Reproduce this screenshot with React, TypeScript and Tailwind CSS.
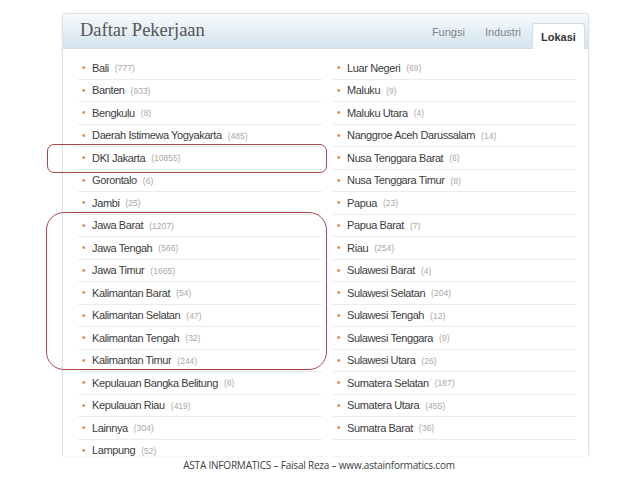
const LEFT = [
  ["Bali", "777"],
  ["Banten", "933"],
  ["Bengkulu", "8"],
  ["Daerah Istimewa Yogyakarta", "485"],
  ["DKI Jakarta", "10855"],
  ["Gorontalo", "6"],
  ["Jambi", "25"],
  ["Jawa Barat", "1207"],
  ["Jawa Tengah", "566"],
  ["Jawa Timur", "1665"],
  ["Kalimantan Barat", "54"],
  ["Kalimantan Selatan", "47"],
  ["Kalimantan Tengah", "32"],
  ["Kalimantan Timur", "244"],
  ["Kepulauan Bangka Belitung", "8"],
  ["Kepulauan Riau", "419"],
  ["Lainnya", "304"],
  ["Lampung", "52"],
];

const RIGHT = [
  ["Luar Negeri", "69"],
  ["Maluku", "9"],
  ["Maluku Utara", "4"],
  ["Nanggroe Aceh Darussalam", "14"],
  ["Nusa Tenggara Barat", "6"],
  ["Nusa Tenggara Timur", "8"],
  ["Papua", "23"],
  ["Papua Barat", "7"],
  ["Riau", "254"],
  ["Sulawesi Barat", "4"],
  ["Sulawesi Selatan", "204"],
  ["Sulawesi Tengah", "12"],
  ["Sulawesi Tenggara", "9"],
  ["Sulawesi Utara", "26"],
  ["Sumatera Selatan", "187"],
  ["Sumatera Utara", "455"],
  ["Sumatra Barat", "36"],
];

function Column({ items }: { items: string[][] }) {
  return (
    <ul>
      {items.map(([name, count]) => (
        <li
          key={name}
          className="h-[22.5px] flex items-center border-b border-[#e9ecee] pl-[4px] text-[11px] tracking-[-0.4px] text-[#3c3c3c]"
        >
          <span className="text-[#e08a50] mr-[7px] text-[10px]">•</span>
          <span>{name}</span>
          <span className="ml-[6px] text-[8.5px] tracking-normal text-[#a8a8a8] mt-[2px]">({count})</span>
        </li>
      ))}
    </ul>
  );
}

export default function App() {
  return (
    <div className="relative w-[638px] h-[479px] bg-white overflow-hidden font-['Liberation_Sans',Arial,sans-serif]">
      <div className="ml-[62px] pt-[13px]">
        <div className="w-[527px] h-[443px] border border-b-0 border-[#dde2e6] rounded-t-[4px] overflow-hidden shadow-[0_0_3px_rgba(0,0,0,0.08)]">
          {/* header */}
          <div className="h-[35px] flex items-end justify-between bg-gradient-to-b from-[#f8fafc] to-[#d4e3ee] border-b border-[#d2dde6]">
            <h1 className="self-center pl-[17px] font-['Liberation_Serif',Georgia,serif] text-[18.5px] text-[#555]">
              Daftar Pekerjaan
            </h1>
            <div className="flex items-end text-[11px] pr-[3px]">
              <span className="px-[10px] pb-[8px] text-[#7a8590]">Fungsi</span>
              <span className="px-[10px] pb-[8px] text-[#7a8590]">Industri</span>
              <span className="ml-[1px] w-[53px] h-[26px] flex items-center justify-center bg-white border border-b-0 border-[#d2dde6] rounded-t-[3px] font-bold text-[#333] mb-[-1px] pt-[2px]">
                Lokasi
              </span>
            </div>
          </div>
          {/* lists */}
          <div className="grid grid-cols-[244px_243px] gap-x-[11px] pl-[15px] pt-[8px]">
            <Column items={LEFT} />
            <Column items={RIGHT} />
          </div>
        </div>
      </div>

      {/* highlight boxes */}
      <div className="absolute left-[47px] top-[144px] w-[280px] h-[29px] border-[1.5px] border-[#a84545] rounded-[7px]" />
      <div className="absolute left-[46px] top-[212px] w-[281px] h-[158px] border-[1.5px] border-[#a84545] rounded-[18px]" />

      {/* footer */}
      <div className="absolute left-0 right-0 top-[458px] text-center text-[10px] text-[#404040] font-['Open_Sans',sans-serif] tracking-[-0.2px]">
        ASTA INFORMATICS – Faisal Reza – www.astainformatics.com
      </div>
    </div>
  );
}
